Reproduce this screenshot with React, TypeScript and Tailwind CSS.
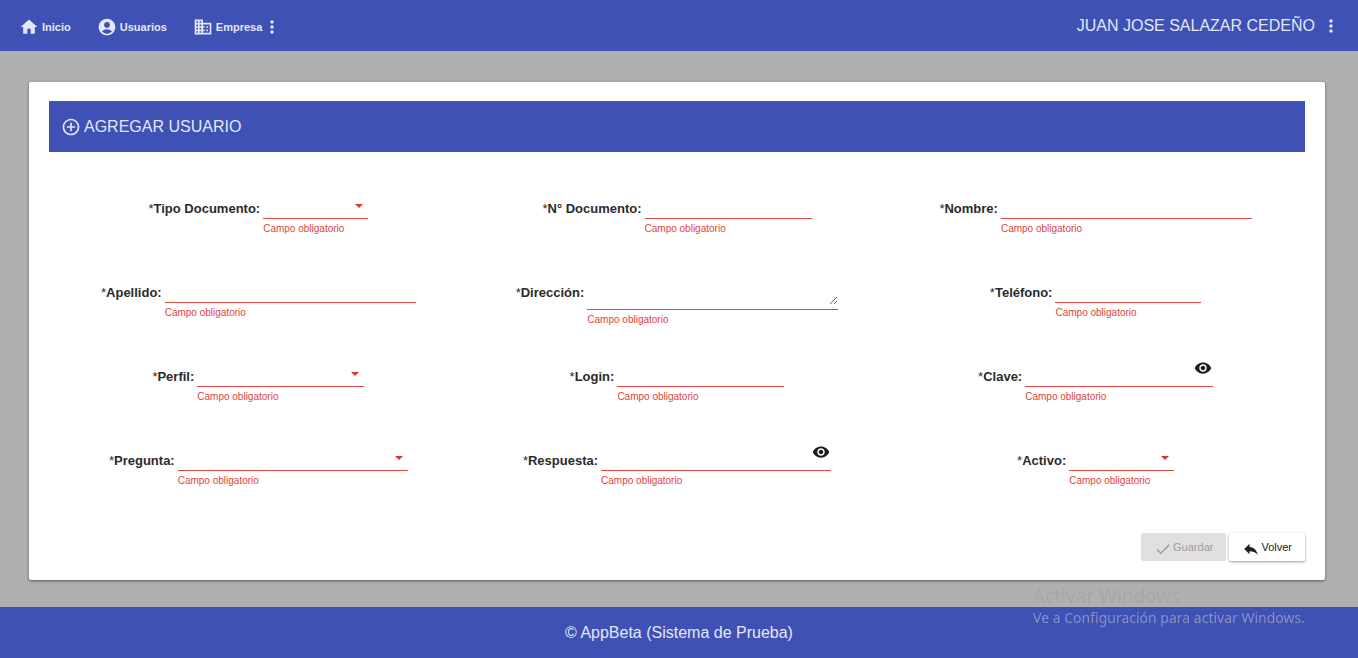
import { useState } from "react";
import {
  MdAccountCircle,
  MdBusiness,
  MdControlPoint,
  MdDone,
  MdHome,
  MdMoreVert,
  MdRemoveRedEye,
  MdReply,
} from "react-icons/md";

type Kind = "text" | "select" | "textarea" | "password";

interface FieldSpec {
  id: string;
  label: string;
  kind: Kind;
  width: string;
}

const fields: FieldSpec[] = [
  { id: "tipo", label: "Tipo Documento:", kind: "select", width: "w-[105px]" },
  { id: "numero", label: "N° Documento:", kind: "text", width: "w-[167px]" },
  { id: "nombre", label: "Nombre:", kind: "text", width: "w-[251px]" },
  { id: "apellido", label: "Apellido:", kind: "text", width: "w-[251px]" },
  { id: "direccion", label: "Dirección:", kind: "textarea", width: "w-[251px]" },
  { id: "telefono", label: "Teléfono:", kind: "text", width: "w-[146px]" },
  { id: "perfil", label: "Perfil:", kind: "select", width: "w-[167px]" },
  { id: "login", label: "Login:", kind: "text", width: "w-[167px]" },
  { id: "clave", label: "Clave:", kind: "password", width: "w-[188px]" },
  { id: "pregunta", label: "Pregunta:", kind: "select", width: "w-[230px]" },
  { id: "respuesta", label: "Respuesta:", kind: "password", width: "w-[230px]" },
  { id: "activo", label: "Activo:", kind: "select", width: "w-[105px]" },
];

const controlBase =
  "block h-5 w-full rounded-none border-b border-[#d9453b] bg-transparent text-[13px] leading-4 outline-none";

function Control({ id, kind }: { id: string; kind: Kind }) {
  const [visible, setVisible] = useState(false);
  const errorId = `${id}-error`;

  if (kind === "textarea") {
    return (
      <div className="border-b border-[#d9453b] pb-1">
        <textarea
          id={id}
          aria-describedby={errorId}
          className="block h-[22px] w-full resize bg-transparent text-[13px] leading-4 outline-none"
        />
      </div>
    );
  }
  if (kind === "select") {
    return (
      <div className="relative">
        <select id={id} aria-describedby={errorId} className={`${controlBase} appearance-none pr-5`} />
        <svg viewBox="0 0 8 4" className="pointer-events-none absolute top-[5px] right-[5px] h-1 w-2 fill-[#e0352b]">
          <path d="M0 0h8L4 4z" />
        </svg>
      </div>
    );
  }
  if (kind === "password") {
    return (
      <div className="relative">
        <input
          id={id}
          type={visible ? "text" : "password"}
          aria-describedby={errorId}
          className={`${controlBase} pr-6`}
        />
        <button
          type="button"
          aria-label="Mostrar u ocultar"
          onClick={() => setVisible(!visible)}
          className="absolute -top-2 right-px text-[#1c1c1c]"
        >
          <MdRemoveRedEye className="size-[18px]" />
        </button>
      </div>
    );
  }
  return <input id={id} type="text" aria-describedby={errorId} className={controlBase} />;
}

function Field({ id, label, kind, width }: FieldSpec) {
  return (
    <div className="flex items-start justify-center gap-[3px]">
      <label htmlFor={id} className="text-[13px] leading-5 font-bold whitespace-nowrap text-[#2b2b2b]">
        <span className="font-normal">*</span>
        {label}
      </label>
      <div className={width}>
        <Control id={id} kind={kind} />
        <p id={`${id}-error`} className="pt-1 text-[10px] leading-3 text-[#e0443a]">
          Campo obligatorio
        </p>
      </div>
    </div>
  );
}

export default function App() {
  return (
    <div className="flex min-h-screen flex-col bg-[#b0b0b0] font-['Liberation_Sans',Arial,sans-serif]">
      <header className="flex h-[51px] items-center justify-between bg-[#3f51b5] pr-[17px] pl-[19px] text-[#e4e7f8]">
        <nav className="flex items-center gap-[26px] pt-0.5 text-[11px] leading-5 font-bold">
          <a href="#inicio" className="flex items-center gap-[3px]">
            <MdHome className="size-5" />
            Inicio
          </a>
          <a href="#usuarios" className="flex items-center gap-[3px]">
            <MdAccountCircle className="size-5" />
            Usuarios
          </a>
          <button type="button" className="flex items-center gap-[3px]">
            <MdBusiness className="size-5" />
            <span className="flex items-center">
              Empresa
              <MdMoreVert className="size-5" />
            </span>
          </button>
        </nav>
        <button type="button" className="flex items-center gap-[6px] text-base leading-5">
          JUAN JOSE SALAZAR CEDEÑO
          <MdMoreVert className="size-5" />
        </button>
      </header>

      <main className="flex-1 pt-[31px] pr-[33px] pb-[27px] pl-[29px]">
        <form
          onSubmit={(e) => e.preventDefault()}
          className="rounded-xs bg-white px-5 py-[19px] shadow-[0_1px_3px_rgba(0,0,0,0.5)]"
        >
          <h1 className="flex h-[51px] items-center gap-[3px] bg-[#3f51b5] px-3 text-base text-[#e4e7f8]">
            <MdControlPoint className="size-5" />
            AGREGAR USUARIO
          </h1>

          <div className="mt-[47px] grid auto-rows-fr grid-cols-3 gap-y-[41px]">
            {fields.map((field) => (
              <Field key={field.id} {...field} />
            ))}
          </div>

          <div className="mt-[39px] flex justify-end gap-[3px] text-[11px]">
            <button
              type="submit"
              disabled
              className="flex h-7 items-center gap-px rounded-xs bg-[#e0e0e0] px-[13px] text-[#9c9c9c]"
            >
              <MdDone className="mt-1 size-[18px]" />
              Guardar
            </button>
            <button
              type="button"
              className="flex h-7 items-center gap-px rounded-xs bg-white px-[13px] text-[#222] shadow-[0_1px_3px_rgba(0,0,0,0.4)]"
            >
              <MdReply className="mt-1 size-[18px]" />
              Volver
            </button>
          </div>
        </form>
      </main>

      <footer className="flex h-[51px] items-center justify-center bg-[#3f51b5] text-base text-[#e4e7f8]">
        © AppBeta (Sistema de Prueba)
      </footer>

      <div className="pointer-events-none fixed right-[53px] bottom-[30px] font-['Noto_Sans','Open_Sans',sans-serif] whitespace-nowrap">
        <p className="text-[19px] leading-6 text-[#a6a6a6]">Activar Windows</p>
        <p className="text-sm leading-5 text-[#8790c4]">Ve a Configuración para activar Windows.</p>
      </div>
    </div>
  );
}
